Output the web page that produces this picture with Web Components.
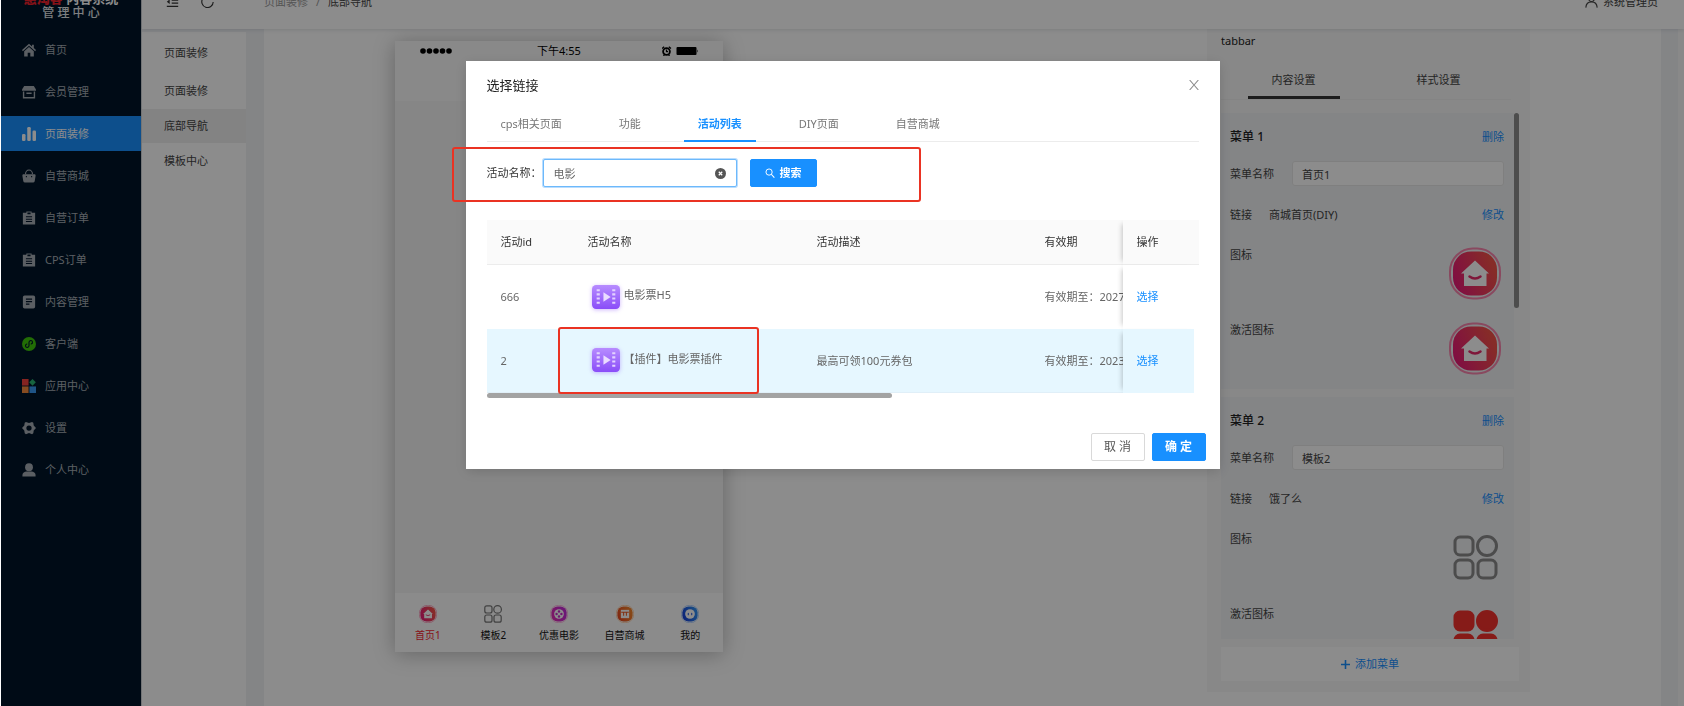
<!DOCTYPE html>
<html lang="zh-CN">
<head>
<meta charset="utf-8">
<title>底部导航 - 管理中心</title>
<style>
  html, body { height: 100%; margin: 0; }
  body {
    overflow: hidden; background: #fff; color: #333; box-sizing: border-box; padding-left: 1px;
    font: 11px/16px "Noto Sans", "Noto Sans CJK SC", sans-serif;
  }
</style>
</head>
<body>
<admin-app></admin-app>
<link-dialog></link-dialog>

<script>
const define = (name, html, setup) => {
  const tpl = document.createElement('template');
  tpl.innerHTML = html;
  customElements.define(name, class extends HTMLElement {
    constructor() {
      super();
      this.attachShadow({ mode: 'open' }).append(tpl.content.cloneNode(true));
    }
    connectedCallback() { if (setup) setup(this, this.shadowRoot); }
  });
};

/* ---------- icons ---------- */
const home = `<path fill="currentColor" d="M8 .8 0 8l1 1.3L8 3l7 6.300L16 8l-2.500-2.200V2h-2v2z"/><path fill="currentColor" d="M8 4.500 2.500 9.500V15.500H6.500v-4.500h3v4.500h4V9.500z"/>`;
const clip = `<path fill="currentColor" fill-rule="evenodd" d="M1 2h4V.5h6V2h4v13.500H1zM6.200 1.600v2h3.600v-2zM4.500 6v1.200h7V6zm0 2.800V10h7V8.800zm0 2.700v1.200h7v-1.200z"/>`;
const grid = (fill, stroke, w) => `<g fill="${fill}" stroke="${stroke}" stroke-width="${w}"><rect x="2" y="2" width="18" height="18" rx="5"/><circle cx="34" cy="11" r="9.500"/><rect x="2" y="25" width="18" height="18" rx="5"/><rect x="25" y="25" width="18" height="18" rx="5"/></g>`;
const badge = (id, a, b, ring, glyph) => `<defs><linearGradient id="${id}" x1="0" y1="1" x2="1" y2=".6"><stop stop-color="${a}"/><stop offset="1" stop-color="${b}"/></linearGradient></defs><rect x="1" y="1" width="50" height="50" rx="23" fill="none" stroke="${ring}" stroke-width="2" opacity=".6"/><rect x="4" y="4" width="44" height="44" rx="18" fill="url(#${id})"/>${glyph}`;
const ICONS = {
  home: ['0 0 16 16', home],
  card: ['0 0 16 16', `<path fill="currentColor" d="M2.500 1h11L16 5v1.500H0V5z"/><path fill="none" stroke="currentColor" stroke-width="1.600" d="M1.800 7.500v7h12.400v-7M5 9.500h6"/>`],
  bars: ['0 0 16 16', `<g fill="currentColor"><rect x="0" y="8" width="4" height="8" rx="1.500"/><rect x="6" y="0" width="4" height="16" rx="1.500"/><rect x="12" y="4" width="4" height="12" rx="1.500"/></g>`],
  bag: ['0 0 16 16', `<path fill="currentColor" d="M1 6h14l.6 1.500L14.500 14a2 2 0 0 1-2 1.500h-9a2 2 0 0 1-2-1.500L.4 7.500z"/><path fill="none" stroke="currentColor" stroke-width="1.300" d="M4 6a4 4.800 0 0 1 8 0"/><path fill="none" stroke="#001529" stroke-width="1.200" d="M5 8v1.500M11 8v1.500"/>`],
  clip: ['0 0 16 16', clip],
  doc: ['0 0 16 16', `<path fill="currentColor" fill-rule="evenodd" d="M3 .5h10a2 2 0 0 1 2 2v11a2 2 0 0 1-2 2H3a2 2 0 0 1-2-2v-11a2 2 0 0 1 2-2zM4.500 4v1.300h7V4zm0 2.900v1.300h7V6.900zm0 2.800V11h4V9.700z"/>`],
  mini: ['0 0 16 16', `<circle cx="8" cy="8" r="8" fill="#3ec70a"/><path fill="none" stroke="#001529" stroke-width="1.300" stroke-linecap="round" d="M5.500 8A2 2 0 1 0 8 10V6a2 2 0 1 1 2.500 2"/>`],
  apps: ['0 0 16 16', `<rect width="7.500" height="7.500" fill="#f5423c"/><path fill="#2bb673" d="m12 0 3.800 3.800L12 7.600 8.200 3.800z"/><rect y="8.500" width="7.500" height="7.500" fill="#f58b3c"/><rect x="8.500" y="8.500" width="7.500" height="7.500" fill="#3a9af5"/>`],
  gear: ['0 0 16 16', `<path fill="currentColor" fill-rule="evenodd" d="m4.500 1 3.500 1.300L11.500 1l1.400 1 .5 3.200L16 8l-2.600 2.800-.5 3.200-1.400 1L8 13.700 4.500 15l-1.400-1-.5-3.200L0 8l2.600-2.800L3.100 2zM8 5a3 3 0 1 0 0 6 3 3 0 0 0 0-6z"/>`],
  person: ['0 0 16 16', `<circle cx="8" cy="4.800" r="4.500" fill="currentColor"/><path fill="currentColor" d="M.5 15.500v-2C.5 11 3 10 5 9.600h6c2 .4 4.500 1.400 4.500 3.900v2z"/>`],
  fold: ['0 0 16 16', `<path fill="none" stroke="currentColor" stroke-width="1.300" d="M1 2.500h14M7 6.500h8M7 10h8M1 14h14"/><path fill="currentColor" d="M1 8.200 4.500 5.500v5.500z"/>`],
  reload: ['0 0 16 16', `<path fill="none" stroke="currentColor" stroke-width="1.400" d="M13.500 4A7 7 0 1 0 15 8.500"/><path fill="currentColor" d="M14.800 1v4.500h-4.500z"/>`],
  user: ['0 0 16 16', `<circle cx="8" cy="4.500" r="3.500" fill="none" stroke="currentColor" stroke-width="1.400"/><path fill="none" stroke="currentColor" stroke-width="1.400" d="M1 15.500c.3-4 3-7 7-7s6.700 3 7 7"/>`],
  search: ['0 0 16 16', `<circle cx="6.500" cy="6.500" r="5" fill="none" stroke="currentColor" stroke-width="1.500"/><path stroke="currentColor" stroke-width="1.700" d="m10 10 5 5.500"/>`],
  close: ['0 0 16 16', `<path stroke="currentColor" stroke-width="1.700" d="m1 0 14 16M15 0 1 16"/>`],
  clear: ['0 0 16 16', `<circle cx="8" cy="8" r="8" fill="currentColor"/><path stroke="#fff" stroke-width="1.800" d="m5.500 5.500 5 5m0-5-5 5"/>`],
  plus: ['0 0 16 16', `<path stroke="currentColor" stroke-width="2.800" d="M8 0v16M0 8h16"/>`],
  dots: ['0 0 32 6', `<g fill="#000"><circle cx="3" cy="3" r="2.800"/><circle cx="9.500" cy="3" r="2.800"/><circle cx="16" cy="3" r="2.800"/><circle cx="22.500" cy="3" r="2.800"/><circle cx="29" cy="3" r="2.800"/></g>`],
  status: ['0 0 36 10', `<circle cx="4.500" cy="5.500" r="3.400" fill="none" stroke="#000" stroke-width="1.800"/><path fill="none" stroke="#000" stroke-width="1.300" d="M4.500 3.500v2.200h1.600M0 2.500 2.200.7M9 2.500 6.800.7M1.500 9.800l1-1.300M7.500 9.800l-1-1.300"/><rect x="14.500" y="1" width="20" height="8" rx="1" fill="#000"/><path fill="#000" d="M35 3.500q1.200 1.500 0 3z"/>`],
  grid: ['0 0 45 45', grid('none', '#8a8a8a', 3)],
  gridThin: ['0 0 45 45', grid('none', '#777', 3)],
  gridRed: ['0 0 45 45', grid('#f5322d', '#f5322d', 3)],
  house: ['0 0 52 52', badge('h', '#e8147f', '#f5504a', '#ff3d7f', `<path fill="#fff" d="M26 13 12 26h3v12.500h22.500V26H40z"/><path fill="none" stroke="#e82a6a" stroke-width="2.500" stroke-linecap="round" d="M20.500 29q5.500 4 11 0"/>`)],
  film: ['0 0 52 52', badge('f', '#e82bb0', '#c42bd8', '#ff5fc0', `<circle cx="26" cy="26" r="14" fill="#fff"/><g fill="#c92bc8"><circle cx="26" cy="19" r="3.500"/><circle cx="26" cy="33" r="3.500"/><circle cx="19" cy="26" r="3.500"/><circle cx="33" cy="26" r="3.500"/></g>`)],
  shop: ['0 0 52 52', badge('s', '#e8401f', '#f5832a', '#ff9c4a', `<path fill="#fff" d="M14 14h24v24H14z"/><path fill="none" stroke="#ee5d25" stroke-width="3" d="M15 21h22M22 22v9M30 22v9"/>`)],
  mine: ['0 0 52 52', badge('m', '#1236d8', '#2f8cf0', '#5a9cff', `<circle cx="26" cy="26" r="14" fill="#fff"/><path fill="none" stroke="#1f55e0" stroke-width="3" stroke-linecap="round" d="M21 24v4M31 24v4"/>`)],
  ticket: ['0 0 27 24', `<defs><linearGradient id="t" x1="0" y1="0" x2="0" y2="1"><stop stop-color="#b78cff"/><stop offset="1" stop-color="#8a4df8"/></linearGradient></defs><rect width="27" height="23" rx="4" fill="url(#t)"/><path stroke="#e3d2ff" stroke-width="3" stroke-dasharray="2 2" d="M6 4v15M21 4v15"/><path fill="#eadcff" d="m11 7 7 4.500-7 4.500z"/>`]
};
customElements.define('app-icon', class extends HTMLElement {
  static observedAttributes = ['name'];
  constructor() { super(); this.attachShadow({ mode: 'open' }); }
  attributeChangedCallback(attr, old, name) {
    const [box, art] = ICONS[name];
    this.shadowRoot.innerHTML = `<style>:host{display:block;flex:none;width:13px;height:13px}svg{display:block;width:100%;height:100%}</style><svg viewBox="${box}" aria-hidden="true">${art}</svg>`;
  }
});

/* ---------- left navigation ---------- */
define('nav-item', `
<style>
  :host { display: block; }
  a { display: flex; align-items: center; gap: 9px; height: 35px; padding-left: 21px; color: #a6adb4; text-decoration: none; }
  app-icon { width: 14px; height: 14px; }
  :host([active]) a { background: #1890ff; color: #fff; }
</style>
<a href="#"><app-icon></app-icon><slot></slot></a>`,
(host, root) => root.querySelector('app-icon').setAttribute('name', host.getAttribute('icon')));

define('side-nav', `
<style>
  :host { display: flex; flex-direction: column; gap: 7px; width: 140px; flex: none; background: #001529; border-right: 1px solid #d0d4d8; }
  header { display: flex; flex-direction: column; justify-content: flex-end; height: 49px; box-sizing: border-box; padding-bottom: 4px; text-align: center; color: #e4e7ea; font-weight: 500; font-size: 12px; line-height: 16px; }
  .brand { font-size: 13px; font-weight: 700; line-height: 14px; color: #fff; }
  b { color: #f5222d; }
</style>
<header><div class="brand"><b>惠淘客</b> 内容系统</div><div>管 理 中 心</div></header>
<nav-item icon="home">首页</nav-item>
<nav-item icon="card">会员管理</nav-item>
<nav-item icon="bars" active>页面装修</nav-item>
<nav-item icon="bag">自营商城</nav-item>
<nav-item icon="clip">自营订单</nav-item>
<nav-item icon="clip">CPS订单</nav-item>
<nav-item icon="doc">内容管理</nav-item>
<nav-item icon="mini">客户端</nav-item>
<nav-item icon="apps">应用中心</nav-item>
<nav-item icon="gear">设置</nav-item>
<nav-item icon="person">个人中心</nav-item>`);

define('top-bar', `
<style>
  :host { display: flex; align-items: center; height: 53px; box-sizing: border-box; padding: 0 26px 2px 24px; background: #fff; box-shadow: 0 1px 4px rgba(0,21,41,.12); position: relative; }
  app-icon + app-icon { margin-left: 22px; }
  nav { display: flex; gap: 8px; margin-left: 50px; color: #999; flex: 1; }
  a { color: inherit; text-decoration: none; }
  nav b { color: #444; font-weight: 400; }
  .user { display: flex; gap: 5px; align-items: center; color: #444; }
</style>
<app-icon name="fold"></app-icon><app-icon name="reload"></app-icon>
<nav><a href="#">页面装修</a><span>/</span><b>底部导航</b></nav>
<div class="user"><app-icon name="user"></app-icon>系统管理员</div>`);

define('sub-menu', `
<style>
  :host { display: flex; flex-direction: column; gap: 1px; width: 104px; flex: none; box-sizing: border-box; padding-top: 4px; background: #fff; color: #444; margin-top: 3px; }
  h2, a { margin: 0; padding-left: 22px; font: inherit; line-height: 34px; color: inherit; text-decoration: none; }
  h2 { margin-bottom: 3px; }
  .on { background: #efefef; }
</style>
<h2>页面装修</h2><a href="#">页面装修</a><a class="on" href="#">底部导航</a><a href="#">模板中心</a>`);

/* ---------- phone preview ---------- */
define('tab-item', `
<style>
  :host { flex: 1; display: flex; flex-direction: column; align-items: center; gap: 4px; color: #111; font-size: 10px; line-height: 16px; }
  :host([active]) { color: #f5222d; }
  app-icon { width: 18px; height: 18px; }
</style>
<app-icon></app-icon><slot></slot>`,
(host, root) => root.querySelector('app-icon').setAttribute('name', host.getAttribute('icon')));

define('phone-preview', `
<style>
  :host { display: flex; flex-direction: column; width: 328px; height: 611px; margin-top: 12px; background: #f5f5f5; box-shadow: 0 2px 20px rgba(0,0,0,.28); }
  header { height: 60px; background: #fafafa; box-sizing: border-box; padding: 0 25px; }
  .bar { display: grid; grid-template-columns: 1fr auto 1fr; align-items: center; height: 20px; font-size: 11px; color: #000; }
  .left { width: 32px; height: 6px; }
  .right { width: 36px; height: 10px; justify-self: end; }
  main { flex: 1; }
  footer { display: flex; box-sizing: border-box; height: 59px; padding-top: 12px; background: #fdfdfd; }
</style>
<header><div class="bar"><app-icon class="left" name="dots"></app-icon><span>下午4:55</span><app-icon class="right" name="status"></app-icon></div></header>
<main></main>
<footer>
  <tab-item icon="house" active>首页1</tab-item><tab-item icon="gridThin">模板2</tab-item><tab-item icon="film">优惠电影</tab-item><tab-item icon="shop">自营商城</tab-item><tab-item icon="mine">我的</tab-item>
</footer>`);

/* ---------- settings panel ---------- */
define('menu-card', `
<style>
  :host { display: block; height: 276px; flex: none; box-sizing: border-box; padding: 16px 10px 0 9px; background: #f0f2f5; }
  .row { display: flex; justify-content: space-between; line-height: 16px; }
  h3 { margin: 0; font: 500 12px/16px "Noto Sans", "Noto Sans CJK SC", sans-serif; color: #222; }
  a { color: #1890ff; text-decoration: none; }
  .name { margin-top: 16px; align-items: center; }
  input { box-sizing: border-box; width: 212px; height: 25px; border: 1px solid #e8e8e8; border-radius: 3px; padding: 0 9px; background: #fff; color: #444; font: inherit; }
  .link { margin-top: 21px; justify-content: flex-start; }
  .link span { flex: 1; margin-left: 17px; }
  .icon { margin-top: 22px; height: 53px; }
  .link + .icon { margin-top: 24px; }
  .icon app-icon { width: 52px; height: 53px; margin-right: 3px; }
  .icon app-icon[small] { width: 45px; height: 45px; margin: 4px 6px; }
</style>
<div class="row"><h3>菜单 <span class="no"></span></h3><a href="#">删除</a></div>
<div class="row name"><label for="name">菜单名称</label><input id="name"></div>
<div class="row link">链接<span><slot></slot></span><a href="#">修改</a></div>
<div class="row icon">图标<app-icon></app-icon></div>
<div class="row icon">激活图标<app-icon></app-icon></div>`,
(host, root) => {
  root.querySelector('.no').textContent = host.getAttribute('no');
  root.querySelector('input').value = host.getAttribute('label');
  root.querySelectorAll('app-icon').forEach((icon, i) => {
    const name = host.getAttribute('icons').split(' ')[i];
    if (name.startsWith('grid')) icon.setAttribute('small', '');
    icon.setAttribute('name', name);
  });
});

define('settings-panel', `
<style>
  :host { display: flex; flex-direction: column; width: 323px; height: 663px; box-sizing: border-box; padding: 4px 11px 11px 14px; background: #f8f8f8; color: #444; }
  h2 { margin: 0; font: inherit; line-height: 16px; color: #222; }
  .tabs { display: flex; margin: 14px 8px 0 0; height: 36px; border-bottom: 1px solid #f0f0f0; }
  button { flex: 1; border: 0; background: none; padding: 0; color: inherit; font: inherit; display: flex; justify-content: center; }
  .tabs span { width: 92px; line-height: 34px; border-bottom: 3px solid transparent; }
  .tabs .on span { border-color: #333; }
  .scroll { display: flex; margin-top: 13px; height: 526px; overflow: hidden; }
  .cards { flex: 1; display: flex; flex-direction: column; gap: 8px; }
  .thumb { width: 5px; height: 195px; background: #8c8c8c; border-radius: 3px; }
  .add { flex: none; align-items: center; gap: 5px; height: 34px; margin: 8px 0 0; background: #fff; color: #1890ff; }
  .add app-icon { width: 9px; height: 9px; }
</style>
<h2>tabbar</h2>
<div class="tabs"><button class="on"><span>内容设置</span></button><button><span>样式设置</span></button></div>
<div class="scroll">
  <div class="cards">
    <menu-card no="1" label="首页1" icons="house house">商城首页(DIY)</menu-card>
    <menu-card no="2" label="模板2" icons="grid gridRed">饿了么</menu-card>
  </div>
  <div class="thumb"></div>
</div>
<button class="add"><app-icon name="plus"></app-icon>添加菜单</button>`);

define('admin-app', `
<style>
  :host { display: flex; height: calc(100vh + 24px); margin-top: -24px; }
  .col { flex: 1; display: flex; flex-direction: column; min-width: 0; }
  .body { flex: 1; display: flex; background: #f0f2f5; }
  .canvas { flex: 1; display: flex; justify-content: space-between; align-items: flex-start; box-sizing: border-box; margin: 0 17px 0 18px; padding: 0 131px; background: #fff; }
  .edge { width: 6px; background: #fafafa; }
</style>
<side-nav></side-nav>
<div class="col">
  <top-bar></top-bar>
  <div class="body"><sub-menu></sub-menu>
    <div class="canvas"><phone-preview></phone-preview><settings-panel></settings-panel></div>
    <div class="edge"></div>
  </div>
</div>`);

/* ---------- dialog ---------- */
define('activity-table', `
<style>
  :host { display: block; color: #666; }
  .wrap { overflow: hidden; }
  table { width: 1228px; table-layout: fixed; border-collapse: separate; border-spacing: 0; text-align: left; }
  th, td { box-sizing: border-box; padding: 0 14px; white-space: nowrap; }
  th { height: 45px; background: #fafafa; border-bottom: 1px solid #ececec; color: #333; font-weight: 400; }
  td { height: 64px; background: #fff; }
  tr.on td { background: #e6f7ff; border-bottom: 1px solid #e0eff8; }
  th:last-child, td:last-child { position: sticky; right: 0; box-shadow: -5px 0 5px -4px rgba(0,0,0,.22); }
  td:last-child { border-right: 5px solid #fff; }
  tr.on td:last-child { border-bottom: 0; }
  .film { display: flex; align-items: center; gap: 4px; margin-left: 4px; }
  .film app-icon { width: 28px; height: 25px; filter: drop-shadow(0 1px 2px rgba(138,77,248,.4)); }
  .film span { padding-bottom: 4px; }
  a { color: #1890ff; text-decoration: none; }
  .thumb { width: 57%; height: 5px; border-radius: 3px; background: #a3a3a3; }
</style>
<div class="wrap"><table>
  <colgroup><col style="width:87px"><col style="width:229px"><col style="width:228px"><col><col style="width:76px"></colgroup>
  <thead><tr><th>活动id</th><th>活动名称</th><th>活动描述</th><th>有效期</th><th>操作</th></tr></thead>
  <tbody>
    <tr><td>666</td><td><div class="film"><app-icon name="ticket"></app-icon><span>电影票H5</span></div></td><td></td><td>有效期至：2027</td><td><a href="#">选择</a></td></tr>
    <tr class="on"><td>2</td><td><div class="film"><app-icon name="ticket"></app-icon><span>【插件】电影票插件</span></div></td><td>最高可领100元券包</td><td>有效期至：2023</td><td><a href="#">选择</a></td></tr>
  </tbody>
</table></div>
<div class="thumb"></div>`);

define('link-dialog', `
<style>
  :host { position: fixed; inset: 0 0 0 1px; background: rgba(0,0,0,.45); display: block; }
  section { position: relative; box-sizing: border-box; width: 754px; max-width: 100%; margin: 61px auto 0; padding: 0 21px 8px; background: #fff; box-shadow: 0 3px 12px rgba(0,0,0,.15); }
  header { display: flex; justify-content: space-between; align-items: center; height: 47px; color: #222; font-size: 13px; }
  h1 { margin: 0; font: inherit; }
  button { font: inherit; box-sizing: border-box; border: 1px solid #d9d9d9; border-radius: 2px; background: #fff; color: #555; height: 28px; padding: 0; }
  header button { border: 0; background: none; height: 16px; padding: 3px 0; color: #8c8c8c; }
  header app-icon { width: 10px; height: 10px; }
  .tabs { display: flex; gap: 29px; height: 34px; border-bottom: 1px solid #ececec; box-sizing: border-box; }
  .tabs button { border: 0; border-radius: 0; height: 34px; padding: 0 14px 2px; color: #777; background: none; }
  .tabs .on { color: #1890ff; font-weight: 700; border-bottom: 2px solid #1890ff; padding-bottom: 0; }
  form { display: flex; align-items: center; margin: 17px 0 33px; color: #333; }
  .box { position: relative; margin-left: 1px; width: 194px; }
  input { display: block; box-sizing: border-box; width: 100%; height: 28px; border: 1px solid #6db9fb; border-radius: 2px; box-shadow: 0 0 0 1px rgba(24,144,255,.3); padding: 0 28px 0 10px; font: inherit; color: #666; outline: 0; }
  .box app-icon { position: absolute; right: 11px; top: 9px; width: 11px; height: 11px; color: #555; }
  .primary { background: #1890ff; border-color: #1890ff; color: #fff; font-weight: 700; }
  .search { display: flex; align-items: center; justify-content: center; gap: 5px; width: 67px; margin-left: 13px; }
  .search app-icon { width: 10px; height: 10px; }
  footer { display: flex; justify-content: flex-end; gap: 7px; margin: 35px -7px 0 0; }
  footer button { width: 54px; font-size: 12px; }
  .mark { position: absolute; box-sizing: border-box; border: 2px solid #ea3323; border-radius: 3px; pointer-events: none; }
  .m1 { left: -14px; top: 86px; width: 469px; height: 55px; }
  .m2 { left: 92px; top: 266px; width: 201px; height: 67px; }
</style>
<section role="dialog" aria-labelledby="t">
  <header><h1 id="t">选择链接</h1><button aria-label="关闭"><app-icon name="close"></app-icon></button></header>
  <div class="tabs"><button>cps相关页面</button><button>功能</button><button class="on">活动列表</button><button>DIY页面</button><button>自营商城</button></div>
  <form><label for="q">活动名称：</label><div class="box"><input id="q" value="电影"><app-icon name="clear"></app-icon></div><button type="button" class="primary search"><app-icon name="search"></app-icon>搜索</button></form>
  <activity-table></activity-table>
  <footer><button>取 消</button><button class="primary">确 定</button></footer>
  <div class="mark m1"></div><div class="mark m2"></div>
</section>`);
</script>
</body>
</html>
